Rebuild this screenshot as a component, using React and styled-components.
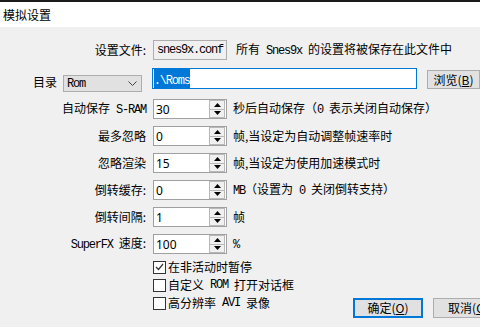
import React from 'react';
import styled, { createGlobalStyle } from 'styled-components';

const GlobalStyle = createGlobalStyle`
  html, body {
    margin: 0;
    padding: 0;
    background: #f0f0f0;
  }
  body {
    font-family: "Noto Sans CJK SC", "Noto Sans", sans-serif;
    font-size: 12px;
    color: #000;
  }
`;

const Window = styled.div`
  width: 480px;
  height: 327px;
  overflow: hidden;
  display: flex;
  flex-direction: column;
  background: #f0f0f0;
`;

const TitleBar = styled.div`
  height: 25px;
  border-top: 2px solid #1b1b1b;
  background: #fff;
  display: flex;
  align-items: center;
  padding-left: 3px;
  font-size: 12px;
  line-height: 1;
`;

const Body = styled.div`
  flex: 1;
  padding-top: 13px;
  display: flex;
  flex-direction: column;
`;

const Mono = styled.span`
  font-family: "Liberation Mono", "DejaVu Sans Mono", monospace;
  font-size: 12px;
  letter-spacing: -1.2px;
  white-space: pre;
`;

const Row = styled.div`
  display: flex;
  align-items: center;
  height: ${p => p.h || 20}px;
  margin-top: ${p => p.gap || 0}px;
  white-space: nowrap;
`;

const Label = styled.div`
  width: 146px;
  margin-right: 7px;
  text-align: right;
  line-height: 1;
`;

const Desc = styled.div`
  margin-left: ${p => p.ml || 6}px;
  line-height: 1;
`;

const FileBox = styled.div`
  width: 74px;
  height: 20px;
  box-sizing: border-box;
  border: 1px solid #adadad;
  display: flex;
  align-items: center;
  padding-left: 3px;
`;

const DirLabel = styled.div`
  width: 23px;
  margin-left: 33px;
  margin-right: 7px;
  line-height: 1;
  align-self: flex-end;
  padding-bottom: 4px;
`;

const Combo = styled.div`
  width: 80px;
  height: 17px;
  box-sizing: border-box;
  align-self: flex-end;
  background: #e1e1e1;
  border: 1px solid #adadad;
  display: flex;
  align-items: center;
  justify-content: space-between;
  padding: 0 4px 0 3px;
`;

const PathInput = styled.div`
  width: 270px;
  height: 21px;
  box-sizing: border-box;
  margin-left: 10px;
  align-self: flex-start;
  background: #fff;
  border: 1px solid #0078d7;
  display: flex;
  align-items: center;
  padding-left: 1px;
`;

const Selected = styled.span`
  background: #0078d7;
  color: #fff;
  padding: 1px 0;
`;

const Button = styled.div`
  width: ${p => p.w || 70}px;
  height: ${p => p.h || 20}px;
  flex-shrink: 0;
  box-sizing: border-box;
  background: #e1e1e1;
  border: ${p => (p.primary ? '2px solid #0078d7' : '1px solid #adadad')};
  display: flex;
  align-items: center;
  justify-content: center;
  margin-left: ${p => p.ml || 0}px;
  line-height: 1;
  u {
    text-decoration: underline;
    text-underline-offset: 1px;
  }
`;

const BrowseButton = styled(Button)`
  align-self: flex-start;
  margin-top: 2px;
`;

const SpinBox = styled.div`
  width: 74px;
  height: 20px;
  box-sizing: border-box;
  border: 1px solid #a0a0a0;
  background: #fff;
  display: flex;
`;

const SpinValue = styled.div`
  flex: 1;
  display: flex;
  align-items: center;
  padding-left: 2px;
  font-family: "Noto Sans", sans-serif;
  font-size: 12px;
`;

const Spinner = styled.div`
  width: 16px;
  display: flex;
  flex-direction: column;
  margin: 0 1px 0 0;
`;

const SpinBtn = styled.div`
  flex: 1;
  background: #f0f0f0;
  border: 1px solid #b8b8b8;
  margin-top: ${p => (p.down ? '-1px' : '0')};
  display: flex;
  align-items: center;
  justify-content: center;
`;

const Footer = styled.div`
  display: flex;
  padding-left: 153px;
  margin-top: 4px;
`;

const CheckList = styled.div`
  width: 200px;
  display: flex;
  flex-direction: column;
  flex-shrink: 0;
`;

const CheckRow = styled.div`
  height: 18px;
  display: flex;
  align-items: center;
  white-space: nowrap;
  line-height: 1;
`;

const Box = styled.div`
  width: 13px;
  height: 13px;
  box-sizing: border-box;
  border: 1px solid #333;
  background: #fff;
  margin-right: 2px;
  display: flex;
  align-items: center;
  justify-content: center;
`;

const ButtonBar = styled.div`
  display: flex;
  margin-top: 40px;
  align-self: flex-start;
`;

const Arrow = ({ down }) => (
  <svg width="7" height="4" viewBox="0 0 7 4">
    <path d={down ? 'M0 0H7L3.5 4Z' : 'M0 4H7L3.5 0Z'} fill="#000" />
  </svg>
);

const Spin = ({ value }) => (
  <SpinBox>
    <SpinValue>{value}</SpinValue>
    <Spinner>
      <SpinBtn><Arrow /></SpinBtn>
      <SpinBtn down><Arrow down /></SpinBtn>
    </Spinner>
  </SpinBox>
);

const Check = ({ checked, children }) => (
  <CheckRow>
    <Box>
      {checked && (
        <svg width="9" height="8" viewBox="0 0 9 8">
          <path d="M1 4L3.5 6.5L8 1" stroke="#333" strokeWidth="1.2" fill="none" />
        </svg>
      )}
    </Box>
    {children}
  </CheckRow>
);

const spinRows = [
  { label: <>自动保存<Mono> S-RAM</Mono></>, value: '30', desc: <>秒后自动保存（<Mono>0 </Mono>表示关闭自动保存）</> },
  { label: '最多忽略', value: '0', desc: '帧,当设定为自动调整帧速率时' },
  { label: '忽略渲染', value: '15', desc: '帧,当设定为使用加速模式时' },
  { label: '倒转缓存:', value: '0', desc: <><Mono>MB</Mono>（设置为<Mono> 0 </Mono>关闭倒转支持）</> },
  { label: '倒转间隔:', value: '1', desc: '帧' },
  { label: <><Mono>SuperFX </Mono>速度:</>, value: '100', desc: <Mono>%</Mono> },
];

export default function App() {
  return (
    <>
      <GlobalStyle />
      <Window>
        <TitleBar>模拟设置</TitleBar>
        <Body>
          <Row>
            <Label>设置文件:</Label>
            <FileBox><Mono>snes9x.conf</Mono></FileBox>
            <Desc ml={9}>所有<Mono> Snes9x </Mono>的设置将被保存在此文件中</Desc>
          </Row>
          <Row h={24} gap={8}>
            <DirLabel>目录</DirLabel>
            <Combo>
              <Mono>Rom</Mono>
              <svg width="9" height="5" viewBox="0 0 9 5">
                <path d="M0.5 0.5L4.5 4.5L8.5 0.5" stroke="#444" fill="none" />
              </svg>
            </Combo>
            <PathInput><Selected><Mono>.\Roms</Mono></Selected></PathInput>
            <BrowseButton ml={10} w={53} h={19}>
              浏览(<u>B</u>)
            </BrowseButton>
          </Row>
          {spinRows.map((r, i) => (
            <Row key={i} gap={7}>
              <Label>{r.label}</Label>
              <Spin value={r.value} />
              <Desc>{r.desc}</Desc>
            </Row>
          ))}
          <Footer>
            <CheckList>
              <Check checked>在非活动时暂停</Check>
              <Check>自定义<Mono> ROM </Mono>打开对话框</Check>
              <Check>高分辨率<Mono> AVI </Mono>录像</Check>
            </CheckList>
            <ButtonBar>
              <Button primary>确定(<u>O</u>)</Button>
              <Button ml={10}>取消(<u>C</u>)</Button>
            </ButtonBar>
          </Footer>
        </Body>
      </Window>
    </>
  );
}
